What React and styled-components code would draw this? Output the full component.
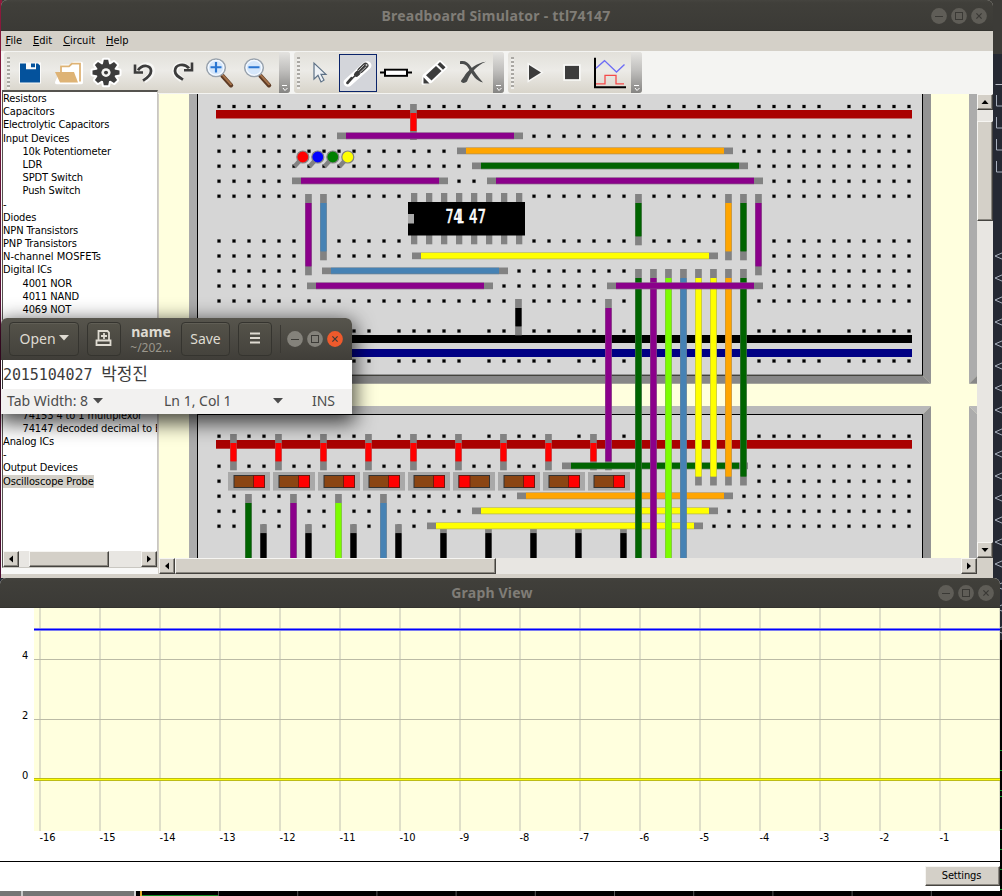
import React from "react";
import styled, { createGlobalStyle, css } from "styled-components";

const GlobalStyle = createGlobalStyle`
  body { margin: 0; overflow: hidden; background: #262a33; }
  * { box-sizing: border-box; }
`;

const tahoma = css`
  font-family: "DejaVu Sans Condensed", "DejaVu Sans", sans-serif;
  font-stretch: condensed;
  font-size: 11px;
  color: #000;
`;

const ubuntu = css`
  font-family: "Noto Sans", "Open Sans", sans-serif;
`;

const Desktop = styled.div`
  position: relative;
  width: 1002px;
  height: 896px;
  overflow: hidden;
  background: #262a33;
`;

const TopPanel = styled.div`
  height: 54px;
  background: #3c3b37;
`;

const DesktopEdge = styled.div`
  position: absolute;
  left: 0;
  top: 0;
  width: 2px;
  height: 578px;
  background: linear-gradient(#8e1a3c, #5c1038 40%, #4a0a30);
`;

const Terminal = styled.svg`
  position: absolute;
  left: 993px;
  top: 54px;
  display: block;
`;

const Taskbar = styled.svg`
  position: absolute;
  left: 0;
  top: 891px;
  display: block;
`;

/* ---------- windows ---------- */

const Window = styled.section`
  position: absolute;
  left: ${(p) => p.$x}px;
  top: ${(p) => p.$y}px;
  width: ${(p) => p.$w}px;
  height: ${(p) => p.$h}px;
  display: flex;
  flex-direction: column;
  overflow: hidden;
  border-radius: 6px 6px 0 0;
  background: ${(p) => p.$bg || "#d4d0c8"};
  box-shadow: ${(p) => (p.$raised ? "0 6px 20px 3px rgba(0,0,0,.72)" : "none")};
`;

const TitleBar = styled.header`
  ${ubuntu}
  position: relative;
  flex: none;
  height: ${(p) => p.$h}px;
  display: flex;
  align-items: center;
  justify-content: flex-end;
  padding: 1px 6px 0;
  background: linear-gradient(#45443f 0, #403f3a 3px, #3b3a36);
  border-bottom: 1px solid #34332f;
`;

const Title = styled.h1`
  flex: 1;
  margin: 0;
  padding-left: ${(p) => p.$shift}px;
  text-align: center;
  font-size: 14px;
  line-height: 18px;
  font-weight: 700;
  letter-spacing: ${(p) => p.$ls || 0}px;
  color: #807d77;
`;

const Controls = styled.div`
  display: flex;
  gap: 4px;
`;

function WindowControls({ active }) {
  const base = active ? "#84827b" : "#5f5d57";
  const ink = active ? "#3c3b37" : "#3a3935";
  return (
    <Controls>
      {["min", "max", "close"].map((kind) => (
        <svg key={kind} width="16" height="16" viewBox="0 0 16 16">
          <circle cx="8" cy="8" r="7.9" fill={active && kind === "close" ? "#ee5a2c" : base} />
          {kind === "min" && <path d="M4 8.5h8" stroke={ink} />}
          {kind === "max" && <rect x="4.5" y="4.5" width="7" height="7" fill="none" stroke={ink} />}
          {kind === "close" && <path d="M5.4 5.4l5.2 5.2M10.6 5.4l-5.2 5.2" stroke={ink} strokeWidth="1.2" />}
        </svg>
      ))}
    </Controls>
  );
}

/* ---------- menu and toolbars ---------- */

const MenuBar = styled.nav`
  ${tahoma}
  flex: none;
  height: 20px;
  display: flex;
  align-items: center;
  gap: 11px;
  padding-left: 4.5px;
  background: #d4d0c8;
`;

const MenuItem = styled.span`
  line-height: 18px;
  &::first-letter { text-decoration: underline; }
`;

const ToolStrip = styled.div`
  flex: none;
  height: 43px;
  display: flex;
  gap: 4px;
  padding: 1px 0 1px 3px;
  background: #f4f4f2;
`;

const Toolbar = styled.div`
  width: ${(p) => p.$w}px;
  height: 41px;
  display: flex;
  align-items: center;
  border-radius: 3px;
  overflow: hidden;
  background: linear-gradient(#e2e0da, #ecebe7 45%, #d8d4ca);
`;

const Grip = styled.div`
  width: 3px;
  height: 32px;
  margin: 0 0 0 3px;
  background: repeating-linear-gradient(#aaa8a3 0 2px, #f0efec 2px 4px);
`;

const Tools = styled.div`
  flex: 1;
  display: flex;
  align-items: center;
  padding-left: ${(p) => p.$pad}px;
`;

const ToolButton = styled.button`
  width: 38px;
  height: 38px;
  flex: none;
  padding: 0;
  display: grid;
  place-items: center;
  border: 1px solid ${(p) => (p.$on ? "#0a246a" : "transparent")};
  background: ${(p) => (p.$on ? "#d3d5da" : "transparent")};
`;

const Overflow = styled.div`
  width: 11px;
  height: 41px;
  display: flex;
  align-items: flex-end;
  justify-content: center;
  background: linear-gradient(#e4e3e0, #c0bfbd 45%, #858482);
`;

const ink = "#3c3c3c";

const icons = {
  save: (
    <>
      <path d="M7 8h22v22H7z" fill="#fff" opacity=".8" />
      <path d="M8 9h6v6h10v-6h2l2 2v18H8z" fill="#04529c" />
      <path d="M19 9h4v4h-4z" fill="#04529c" />
    </>
  ),
  open: (
    <>
      <path d="M7 29l5-12V12h9l3-3h7v20z" fill="#fff" stroke="#fff" strokeWidth="4" strokeLinejoin="round" />
      <path d="M11 18v-6h8l3-3h8v19" fill="none" stroke="#deb375" strokeWidth="1.8" />
      <path d="M5 18h19l4 11H10z" fill="#deb375" />
    </>
  ),
  gear: (
    <>
      {[
        ["#fff", 4],
        [ink, 0],
      ].map(([c, w]) => (
        <g key={c} fill={c} stroke={c} strokeWidth={w} strokeLinejoin="round">
          <circle cx="18" cy="18.500" r="9.5" />
          {[0, 45, 90, 135, 180, 225, 270, 315].map((a) => (
            <path key={a} d="M14.800 10l1-5h4.400l1 5z" transform={`rotate(${a} 18 18.500)`} />
          ))}
        </g>
      ))}
      <circle cx="18" cy="18.500" r="4.600" fill="#f4f4f2" />
      <circle cx="18" cy="18.500" r="2" fill={ink} />
    </>
  ),
  undo: (
    <g fill="none">
      <path d="M14 14c6-6 12-3 12 3 0 4-3 7-8 10" stroke="#f6f6f4" strokeWidth="6" />
      <path d="M12 16c5-7 13-5 13 1 0 4-3 7-8 10" stroke={ink} strokeWidth="2.800" />
      <path d="M9 10v8.500h8" stroke={ink} strokeWidth="2.600" />
    </g>
  ),
  redo: (
    <g fill="none">
      <path d="M23 13c-6-5-12-2-12 4 0 4 3 6 7 9" stroke="#f6f6f4" strokeWidth="6" />
      <path d="M25 14c-5-6-14-4-14 3 0 4 3 6 8 9" stroke={ink} strokeWidth="2.800" />
      <path d="M28 8v8h-8" stroke={ink} strokeWidth="2.600" />
    </g>
  ),
  zoomIn: <Magnifier plus />,
  zoomOut: <Magnifier />,
  pointer: (
    <path d="M12 8.500v17l4-4 3 7 3-2-3-6h5z" fill="#eef2f6" stroke="#5d7186" strokeWidth="1.2" />
  ),
  driver: (
    <g strokeLinecap="round">
      <path d="M8 29L27 11" stroke="#fff" strokeWidth="9" />
      <path d="M7.500 29.500l4-5" stroke={ink} strokeWidth="2.800" />
      <path d="M10 27l8-8" stroke={ink} strokeWidth="1.600" />
      <path d="M16.500 20.500l1.500-1.500" stroke={ink} strokeWidth="5" />
      <path d="M20.500 16l5-5" stroke={ink} strokeWidth="6" />
      <path d="M20 18.500l6-6M18.500 16.500l5.500-6" stroke="#cfcfcf" strokeWidth=".9" />
      <circle cx="26.500" cy="10.500" r="1" fill="#cfcfcf" />
    </g>
  ),
  resistor: (
    <>
      <path d="M2 18.500h32" stroke="#000" strokeWidth="2" />
      <rect x="7" y="15.500" width="22" height="6.5" fill="#fff" stroke="#000" strokeWidth="2" />
    </>
  ),
  pencil: (
    <>
      <path d="M7 30l1-8L24 7l6 6-15 15z" fill="#fff" stroke="#fff" strokeWidth="3" strokeLinejoin="round" />
      <path d="M7.500 30v-6.500l6 6.500z" fill={ink} />
      <path d="M10 21.500l10-10 5.500 5.500-10 10z" fill={ink} />
      <path d="M21.500 10l2.500-2.500 5.500 5.500-2.500 2.500z" fill={ink} />
    </>
  ),
  cross: (
    <>
      <path d="M6 6.500c5-1 8 1 11 6 4 6 7 11 12 16.500-7-2-10-7-14-14-2-4-4-6-9-5.500z" fill="#4a4c4c" />
      <path d="M32 7c-9 1-17 8-21 14-2 4-4 5-4 7 1 2 4 2 6 0 1-3 3-7 6-11 4-5 8-8 13-10z" fill="#4a4c4c" />
    </>
  ),
  play: (
    <path d="M13 10.500v16l12-8z" fill={ink} stroke="#f6f6f4" strokeWidth="3" paintOrder="stroke" />
  ),
  stop: <rect x="11" y="11.500" width="14" height="14" fill={ink} stroke="#f8f8f6" strokeWidth="3.5" paintOrder="stroke" />,
  graph: (
    <g fill="none">
      <path d="M3 3v31h31" stroke="#000" strokeWidth="2" />
      <path d="M4 14l8.500-8 12 12 8-8" stroke="#6d6df5" strokeWidth="1.3" />
      <path d="M4 30.500h9v-9h11v9h8" stroke="#f54a4a" strokeWidth="1.3" />
    </g>
  ),
};

function Magnifier({ plus }) {
  return (
    <>
      <path d="M20.500 22l8.500 10" stroke="#5e3b25" strokeWidth="4.500" strokeLinecap="round" />
      <path d="M20.500 21l8.500 10" stroke="#a3714a" strokeWidth="2" strokeLinecap="round" />
      <circle cx="14" cy="13.500" r="9.3" fill="#d5e7fb" stroke="#9aa3ad" strokeWidth="1.6" />
      <circle cx="14" cy="13.500" r="7.8" fill="none" stroke="#f4f9ff" strokeWidth="1.2" />
      <path d={plus ? "M8.500 13h11M14 7.500v11" : "M8.500 13h11"} stroke="#2a76d2" strokeWidth="2.2" />
    </>
  );
}

function Tool({ name, on }) {
  return (
    <ToolButton $on={on} aria-label={name}>
      <svg width="36" height="36" viewBox="0 0 36 38" preserveAspectRatio="none">
        {icons[name]}
      </svg>
    </ToolButton>
  );
}

function ToolGroup({ width, pad, names, active }) {
  return (
    <Toolbar $w={width}>
      <Grip />
      <Tools $pad={pad}>
        {names.map((n) => (
          <Tool key={n} name={n} on={n === active} />
        ))}
      </Tools>
      <Overflow>
        <svg width="8" height="10" viewBox="0 0 8 10">
          <path d="M1 2.500h5M2 5l2 2.500L6.500 5" stroke="#fff" fill="none" />
        </svg>
      </Overflow>
    </Toolbar>
  );
}

/* ---------- parts list ---------- */

const Body = styled.div`
  flex: none;
  height: 480px;
  display: flex;
`;

const Sidebar = styled.aside`
  width: 157px;
  margin-top: -4px;
  height: 484px;
  display: flex;
  flex-direction: column;
  background: #f8f8f7;
`;

const ListBox = styled.div`
  height: 478px;
  margin-left: 1px;
  border: 1px solid #c9c7c1;
  border-left-color: #55534f;
  border-top: 2px solid #55534f;
  background: #fff;
  display: flex;
  flex-direction: column;
  overflow: hidden;
`;

const List = styled.ul`
  ${tahoma}
  flex: 1;
  margin: 0;
  padding: 0;
  list-style: none;
  overflow: hidden;
`;

const ListItem = styled.li`
  height: 13.2px;
  line-height: 13.2px;
  padding-left: ${(p) => (p.$child ? 19.5 : 0)}px;
  white-space: nowrap;
  letter-spacing: ${(p) => p.$ls ?? -0.12}px;
`;

const Selected = styled.span`
  display: inline-block;
  background: #d4d0c8;
`;

const HiddenRows = styled.li`
  height: ${(p) => p.$n * 13.2}px;
`;

const UPPER = [
  ["Resistors"], ["Capacitors"], ["Electrolytic Capacitors", 0, -0.2], ["Input Devices"],
  ["10k Potentiometer", 1, -0.2], ["LDR", 1], ["SPDT Switch", 1], ["Push Switch", 1],
  ["-"], ["Diodes"], ["NPN Transistors"], ["PNP Transistors"], ["N-channel MOSFETs", 0, 0.05],
  ["Digital ICs"], ["4001 NOR", 1], ["4011 NAND", 1], ["4069 NOT", 1],
];
const LOWER = [
  ["74153 4 to 1 multiplexor", 1], ["74147 decoded decimal to BCD", 1],
  ["Analog ICs"], ["-"], ["Output Devices"],
];

/* ---------- scrollbars ---------- */

const raised = css`
  background: #d4d0c8;
  border: 1px solid;
  border-color: #f6f5f2 #45433f #45433f #f6f5f2;
  box-shadow: inset -1px -1px #8a8780;
`;

const ScrollBar = styled.div`
  flex: none;
  display: flex;
  flex-direction: ${(p) => (p.$v ? "column" : "row")};
  width: ${(p) => (p.$v ? "16px" : "auto")};
  height: ${(p) => (p.$v ? "auto" : "16px")};
  background: #e8e6e2;
`;

const ScrollButton = styled.div`
  ${raised}
  width: 16px;
  height: 16px;
  flex: none;
  display: grid;
  place-items: center;
`;

const Track = styled.div`
  flex: none;
  flex-basis: ${(p) => p.$size}px;
`;

const Thumb = styled.div`
  ${raised}
  flex: none;
  flex-basis: ${(p) => p.$size}px;
`;

const Rest = styled.div`
  flex: 1;
`;

const ARROWS = { up: "M4 2L7.500 6H.5z", down: "M.5 2h7L4 6z", left: "M6 .5v7L2 4z", right: "M2 .5v7L6 4z" };

function Scroll({ vertical, before, thumb }) {
  const [a, b] = vertical ? ["up", "down"] : ["left", "right"];
  const arrow = (d) => (
    <ScrollButton>
      <svg width="8" height="8" viewBox="0 0 8 8"><path d={ARROWS[d]} /></svg>
    </ScrollButton>
  );
  return (
    <ScrollBar $v={vertical}>
      {arrow(a)}
      <Track $size={before} />
      <Thumb $size={thumb} />
      <Rest />
      {arrow(b)}
    </ScrollBar>
  );
}

/* ---------- breadboard ---------- */

const Canvas = styled.div`
  flex: none;
  width: 818px;
  margin-left: 1px;
  display: flex;
  flex-direction: column;
  & > svg { display: block; }
`;

const RightRail = styled.div`
  width: 16px;
  display: flex;
  flex-direction: column;
  background: #d4d0c8;
  & > :first-child { height: 464px; }
`;

const PURPLE = "#8b008b";
const GREEN = "#006400";
const ORANGE = "#ffa500";
const YELLOW = "#ffff00";
const STEEL = "#4682b4";
const LIME = "#7cfc00";

const cols = Array.from({ length: 47 }, (_, i) => i);
const nine = Array.from({ length: 9 }, (_, i) => i);

function HoleRow({ y, rail }) {
  return cols
    .filter((k) => !rail || k % 6 !== 5)
    .map((k) => (
      <g key={k}>
        <rect x={217 + 15 * k} y={y - 2} width="4" height="4" fill="#a6a6a6" />
        <rect x={217.500 + 15 * k} y={y - 1.500} width="3" height="3" fill="#000" />
      </g>
    ));
}

function WireH({ x1, x2, y, c }) {
  return (
    <g>
      <rect x={x1} y={y - 3.500} width={x2 - x1} height="6.700" fill="#828282" />
      <rect x={x1 + 9} y={y - 3.500} width={x2 - x1 - 18} height="6.700" fill={c} opacity=".6" />
      <rect x={x1 + 9} y={y - 3} width={x2 - x1 - 18} height="5.300" fill={c} />
    </g>
  );
}

function WireV({ x, y1, y2, c }) {
  return (
    <g>
      <rect x={x - 3.400} y={y1} width="6.700" height={y2 - y1} fill="#828282" />
      <rect x={x - 3.400} y={y1 + 9} width="6.700" height={y2 - y1 - 18} fill={c} opacity=".6" />
      <rect x={x - 2.700} y={y1 + 9} width="5.300" height={y2 - y1 - 18} fill={c} />
    </g>
  );
}

function Frame({ x, y, w, h }) {
  const r = x + w;
  const b = y + h;
  return (
    <g>
      <path d={`M${x} ${y}H${r}L${r - 8} ${y + 8}H${x + 8}z`} fill="#b9b9b9" />
      <path d={`M${x} ${y}V${b}L${x + 8} ${b - 8}V${y + 8}z`} fill="#acacac" />
      <path d={`M${r} ${y}V${b}L${r - 8} ${b - 8}V${y + 8}z`} fill="#939393" />
      <path d={`M${x} ${b}H${r}L${r - 8} ${b - 8}H${x + 8}z`} fill="#878787" />
      <rect x={x + 8.500} y={y + 8.500} width={w - 17} height={h - 17} fill="#d6d6d6" stroke="#000" />
    </g>
  );
}

function Switch({ x, flipped }) {
  return (
    <g>
      <rect x={x} y="472" width="42" height="18.600" fill="#a9a9a9" />
      <rect x={x + 6} y="475.500" width="30.500" height="12" fill="#8b4513" stroke="#333" />
      <rect x={flipped ? x + 6 : x + 25.500} y="475.500" width="11" height="12" fill="#f00" stroke="#5a1a10" strokeWidth=".8" />
    </g>
  );
}

const ChipText = styled.text`
  font-family: "DejaVu Sans Condensed", "DejaVu Sans", sans-serif;
  font-size: 20px;
  fill: #fff;
  stroke: #fff;
  stroke-width: 0.7px;
`;

function Breadboard() {
  return (
    <svg width="818" height="464" viewBox="159 94 818 464">
      <rect x="159" y="94" width="818" height="464" fill="#ffffde" />
      <Frame x={189} y={60} w={742} h={323.700} />
      <Frame x={189} y={406} w={742} h={324} />
      <Frame x={969} y={60} w={742} h={323.700} />
      <Frame x={969} y={406} w={742} h={324} />

      <rect x="216" y="110" width="696" height="8.500" fill="#a00" />
      <rect x="216" y="335" width="696" height="8" fill="#000" />
      <rect x="216" y="349" width="696" height="8" fill="#000084" />
      <rect x="216" y="440" width="696" height="8.700" fill="#a00" />
      <HoleRow y={106.500} rail />
      {[136.200, 151.200, 166.200, 181.200, 196.200, 241, 256, 271, 286, 301].map((y) => <HoleRow key={y} y={y} />)}
      <HoleRow y={331} rail />
      <HoleRow y={361} rail />
      <HoleRow y={436.200} rail />
      {[466.200, 481.200, 496.200, 511.200, 526.200].map((y) => <HoleRow key={y} y={y} />)}

      <WireV x={413.500} y1={104} y2={140} c="#f00" />
      <WireH x1={337} x2={523} y={136} c={PURPLE} />
      <WireH x1={457} x2={733} y={151} c={ORANGE} />
      <WireH x1={472} x2={748} y={166} c={GREEN} />
      <WireH x1={292} x2={448} y={181} c={PURPLE} />
      <WireH x1={487} x2={763} y={181} c={PURPLE} />
      {["#f00", "#00f", "#008000", "#ff0"].map((c, i) => (
        <g key={c}>
          <path d={`M${303 + 15 * i} 157l-8.500 9.500`} stroke="#828282" strokeWidth="4.500" />
          <circle cx={302.800 + 15 * i} cy="157" r="6" fill={c} stroke="#828282" strokeWidth="1.200" />
        </g>
      ))}
      <WireV x={308.500} y1={194} y2={275.300} c={PURPLE} />
      <WireV x={323.500} y1={194} y2={260.300} c={STEEL} />
      <WireV x={638.500} y1={194} y2={245.300} c={GREEN} />
      <WireV x={728.500} y1={194} y2={260.300} c={ORANGE} />
      <WireV x={743.500} y1={194} y2={260.300} c={GREEN} />
      <WireV x={758.500} y1={194} y2={275.300} c={PURPLE} />
      <WireH x1={412} x2={718} y={256} c={YELLOW} />
      <WireH x1={322} x2={508} y={271} c={STEEL} />
      <WireH x1={307} x2={493} y={286} c={PURPLE} />
      <WireV x={518.500} y1={299} y2={335.300} c="#000" />

      {nine.slice(0, 8).map((k) => (
        <rect key={k} x={411 + 15 * k} y="193" width="6.300" height="51.300" fill="#828282" />
      ))}
      <rect x="408" y="202" width="117" height="33.500" fill="#000" />
      <rect x="408" y="214" width="6" height="9.500" fill="#aaa" />
      <ChipText x="445.500" y="222.500" textLength="16" lengthAdjust="spacingAndGlyphs">74</ChipText>
      <ChipText x="456.500" y="222.500" textLength="8" lengthAdjust="spacingAndGlyphs">1</ChipText>
      <ChipText x="469" y="222.500" textLength="17" lengthAdjust="spacingAndGlyphs">47</ChipText>

      {nine.map((k) => <WireV key={k} x={233.500 + 45 * k} y1={434} y2={470.300} c="#f00" />)}
      {nine.map((k) => <Switch key={k} x={228 + 45 * k} flipped={k === 5} />)}
      {[GREEN, PURPLE, LIME, STEEL].map((c, i) => (
        <WireV key={c} x={248.500 + 45 * i} y1={494} y2={620} c={c} />
      ))}
      {nine.map((k) => <WireV key={k} x={263.500 + 45 * k} y1={524.200} y2={620} c="#000" />)}

      <WireV x={608.500} y1={299} y2={470.300} c={PURPLE} />
      <WireH x1={562} x2={748} y={466} c={GREEN} />
      <WireH x1={517} x2={733} y={496} c={ORANGE} />
      <WireH x1={472} x2={718} y={511} c={YELLOW} />
      <WireH x1={427} x2={703} y={526} c={YELLOW} />
      {[GREEN, PURPLE, LIME, STEEL].map((c, i) => (
        <WireV key={c} x={638.500 + 15 * i} y1={269} y2={620} c={c} />
      ))}
      {[YELLOW, YELLOW, ORANGE, GREEN].map((c, i) => (
        <WireV key={i} x={698.500 + 15 * i} y1={269} y2={485.500} c={c} />
      ))}
      <WireH x1={607} x2={763} y={286} c={PURPLE} />
    </svg>
  );
}

/* ---------- graph ---------- */

const GraphBody = styled.div`
  flex: none;
  height: 254px;
  border-bottom: 1px solid #000;
  & > svg { display: block; }
`;

const GraphFooter = styled.footer`
  flex: 1;
  display: flex;
  justify-content: flex-end;
  align-items: flex-start;
  padding-top: 4px;
`;

const SettingsButton = styled.button`
  ${tahoma}
  ${raised}
  width: 75px;
  height: 20px;
  padding: 0 2px 0 0;
  line-height: 16px;
  letter-spacing: -0.15px;
`;

const AxisLabel = styled.text`
  ${tahoma}
  fill: #000;
`;

function Graph() {
  return (
    <svg width="1000" height="253" viewBox="0 608 1000 253">
      <rect x="34" y="608" width="966" height="223" fill="#ffffde" />
      {Array.from({ length: 17 }, (_, i) => (
        <rect key={i} x={39 + 60 * i} y="608" width="2" height="223" fill="#dfdfc8" />
      ))}
      <rect x="34" y="659" width="966" height="1" fill="#bbbba6" />
      <rect x="34" y="719" width="966" height="1" fill="#bbbba6" />
      <rect x="34" y="628" width="966" height="3" fill="#7d7df0" />
      <rect x="34" y="629" width="966" height="1" fill="#00f" />
      <rect x="34" y="778" width="966" height="3" fill="#bcbc18" />
      <rect x="34" y="779" width="966" height="1" fill="#ff0" />
      {[[4, 659], [2, 719], [0, 779]].map(([t, y]) => (
        <AxisLabel key={t} x="22" y={y}>{t}</AxisLabel>
      ))}
      {Array.from({ length: 16 }, (_, i) => (
        <AxisLabel key={i} x={39.500 + 60 * i} y="841">{`-${16 - i}`}</AxisLabel>
      ))}
    </svg>
  );
}

/* ---------- text editor ---------- */

const EditorHeader = styled.header`
  ${ubuntu}
  flex: none;
  height: 42px;
  display: flex;
  align-items: center;
  padding-left: 8px;
  background: linear-gradient(#57554d, #403e39);
  color: #dfdbd2;
`;

const HeaderButton = styled.button`
  ${ubuntu}
  width: ${(p) => p.$w}px;
  height: 34px;
  flex: none;
  margin: 0 ${(p) => p.$gap || 0}px 0 0;
  padding: 0 0 2px;
  display: flex;
  align-items: center;
  justify-content: center;
  gap: 3px;
  font-size: 14px;
  color: #dfdbd2;
  border: 1px solid #35342f;
  border-radius: 4px;
  background: linear-gradient(#545249, #45433d);
  box-shadow: inset 0 1px rgba(255, 255, 255, 0.07);
`;

const FileBlock = styled.div`
  width: 60px;
  text-align: center;
`;

const FileName = styled.div`
  font-size: 14px;
  line-height: 16px;
  font-weight: 700;
`;

const FilePath = styled.div`
  font-size: 12px;
  line-height: 15px;
  color: #9b978d;
`;

const Divider = styled.div`
  width: 1px;
  height: 28px;
  margin: 0 6px 0 8px;
  background: #3a3833;
`;

const Document = styled.div`
  height: 29px;
  display: flex;
  align-items: center;
  border-left: 1px solid #333;
  margin-left: 1px;
  background: #fff;
  font-family: "DejaVu Sans Mono", monospace;
  font-size: 15px;
  letter-spacing: -0.1px;
  line-height: 20px;
  white-space: pre;
  color: #3c3c3c;
`;

const Hangul = styled.span`
  font-family: "Noto Sans CJK KR", sans-serif;
  font-size: 17px;
  margin-top: -3px;
`;

const StatusBar = styled.footer`
  ${ubuntu}
  flex: 1;
  display: flex;
  align-items: center;
  padding: 0 0 2px 6px;
  font-size: 14px;
  background: #f2f1f0;
  color: #4c4c4c;
`;

const StatusItem = styled.span`
  width: ${(p) => p.$w}px;
  display: flex;
  align-items: center;
  justify-content: ${(p) => (p.$spread ? "space-between" : "flex-start")};
  gap: 5px;
`;

const Caret = () => (
  <svg width="10" height="6" viewBox="0 0 10 6"><path d="M0 0h10L5 5.500z" fill="currentColor" /></svg>
);

export default function App() {
  return (
    <Desktop>
      <GlobalStyle />
      <TopPanel />
      <Terminal width="9" height="842" viewBox="993 54 9 842">
        <rect x="993" y="54" width="9" height="842" fill="#252933" />
        <path d="M995.500 84.500h7" stroke="#b9bdc6" />
        {[95, 117, 139, 161].map((y) => (
          <path key={y} d={`M996.500 ${y}v11h6`} stroke="#a9b0bd" fill="none" />
        ))}
        {Array.from({ length: 18 }, (_, i) => (
          <path key={i} d={`M1003 ${252.500 + 22 * i}l-8 3.500 8 3.500`} stroke="#a9b0bd" fill="none" />
        ))}
        <rect x="1000" y="640" width="2" height="256" fill="#000" />
        {[750, 770, 790, 796, 829, 849, 869, 889].map((y) => (
          <rect key={y} x="1000" y={y} width="2" height="1" fill="#0a9a2a" />
        ))}
      </Terminal>
      <DesktopEdge />

      <Window $x={1} $y={0} $w={992} $h={578}>
        <TitleBar $h={31}>
          <Title $shift={54} $ls={0.24}>Breadboard Simulator - ttl74147</Title>
          <WindowControls />
        </TitleBar>
        <MenuBar>
          <MenuItem>File</MenuItem>
          <MenuItem>Edit</MenuItem>
          <MenuItem>Circuit</MenuItem>
          <MenuItem>Help</MenuItem>
        </MenuBar>
        <ToolStrip>
          <ToolGroup width={286} pad={1} names={["save", "open", "gear", "undo", "redo", "zoomIn", "zoomOut"]} />
          <ToolGroup width={210} pad={1} names={["pointer", "driver", "resistor", "pencil", "cross"]} active="driver" />
          <ToolGroup width={134} pad={1} names={["play", "stop", "graph"]} />
        </ToolStrip>
        <Body>
          <Sidebar>
            <ListBox>
              <List>
                {UPPER.map(([t, child, ls], i) => <ListItem key={i} $child={child} $ls={ls}>{t}</ListItem>)}
                <HiddenRows $n={7} />
                {LOWER.map(([t, child, ls], i) => <ListItem key={i} $child={child} $ls={ls}>{t}</ListItem>)}
                <ListItem><Selected>Oscilloscope Probe</Selected></ListItem>
              </List>
              <Scroll before={10} thumb={80} />
            </ListBox>
          </Sidebar>
          <Canvas>
            <Breadboard />
            <Scroll before={0} thumb={321} />
          </Canvas>
          <RightRail>
            <Scroll vertical before={11} thumb={100} />
          </RightRail>
        </Body>
      </Window>

      <Window $x={0} $y={578} $w={1000} $h={313} $bg="#fff">
        <TitleBar $h={30}>
          <Title $shift={40} $ls={0.2}>Graph View</Title>
          <WindowControls />
        </TitleBar>
        <GraphBody><Graph /></GraphBody>
        <GraphFooter><SettingsButton>Settings</SettingsButton></GraphFooter>
      </Window>

      <Window $x={1} $y={318} $w={351} $h={96} $bg="#fff" $raised>
        <EditorHeader>
          <HeaderButton $w={70} $gap={8}>Open<Caret /></HeaderButton>
          <HeaderButton $w={34}>
            <svg width="18" height="18" viewBox="0 0 18 18" fill="none" stroke="#dfdbd2" strokeWidth="1.800">
              <path d="M3.500 11V2h9l1.500 1.500V11M1.500 16v-4.500h14V16zM9 4v6M6 7h6" />
            </svg>
          </HeaderButton>
          <FileBlock>
            <FileName>name</FileName>
            <FilePath>~/202…</FilePath>
          </FileBlock>
          <HeaderButton $w={49} $gap={8}>Save</HeaderButton>
          <HeaderButton $w={34}>
            <svg width="10" height="12" viewBox="0 0 10 12"><path d="M0 1.500h10M0 6h10M0 10.500h10" stroke="#dfdbd2" strokeWidth="1.800" /></svg>
          </HeaderButton>
          <Divider />
          <WindowControls active />
        </EditorHeader>
        <Document>2015104027 <Hangul>박정진</Hangul></Document>
        <StatusBar>
          <StatusItem $w={157}>Tab Width: 8<Caret /></StatusItem>
          <StatusItem $w={119} $spread>Ln 1, Col 1<Caret /></StatusItem>
          <StatusItem $w={52}><Rest />INS</StatusItem>
        </StatusBar>
      </Window>

      <Taskbar width="1000" height="5" viewBox="0 0 1000 5">
        <rect width="1000" height="5" fill="#000" />
        <rect width="136" height="5" fill="#757575" />
        <rect x="21" width="2" height="5" fill="#c8c8c8" />
        <rect x="134" width="2" height="5" fill="#d4d4d4" />
        <rect x="140" width="2" height="5" fill="#e0ac28" />
        <rect x="142" y="4" width="77" height="1" fill="#128a22" />
        {Array.from({ length: 10 }, (_, i) => (
          <rect key={i} x={218 + 79.200 * i} width="1" height="5" fill="#555" />
        ))}
      </Taskbar>
    </Desktop>
  );
}
